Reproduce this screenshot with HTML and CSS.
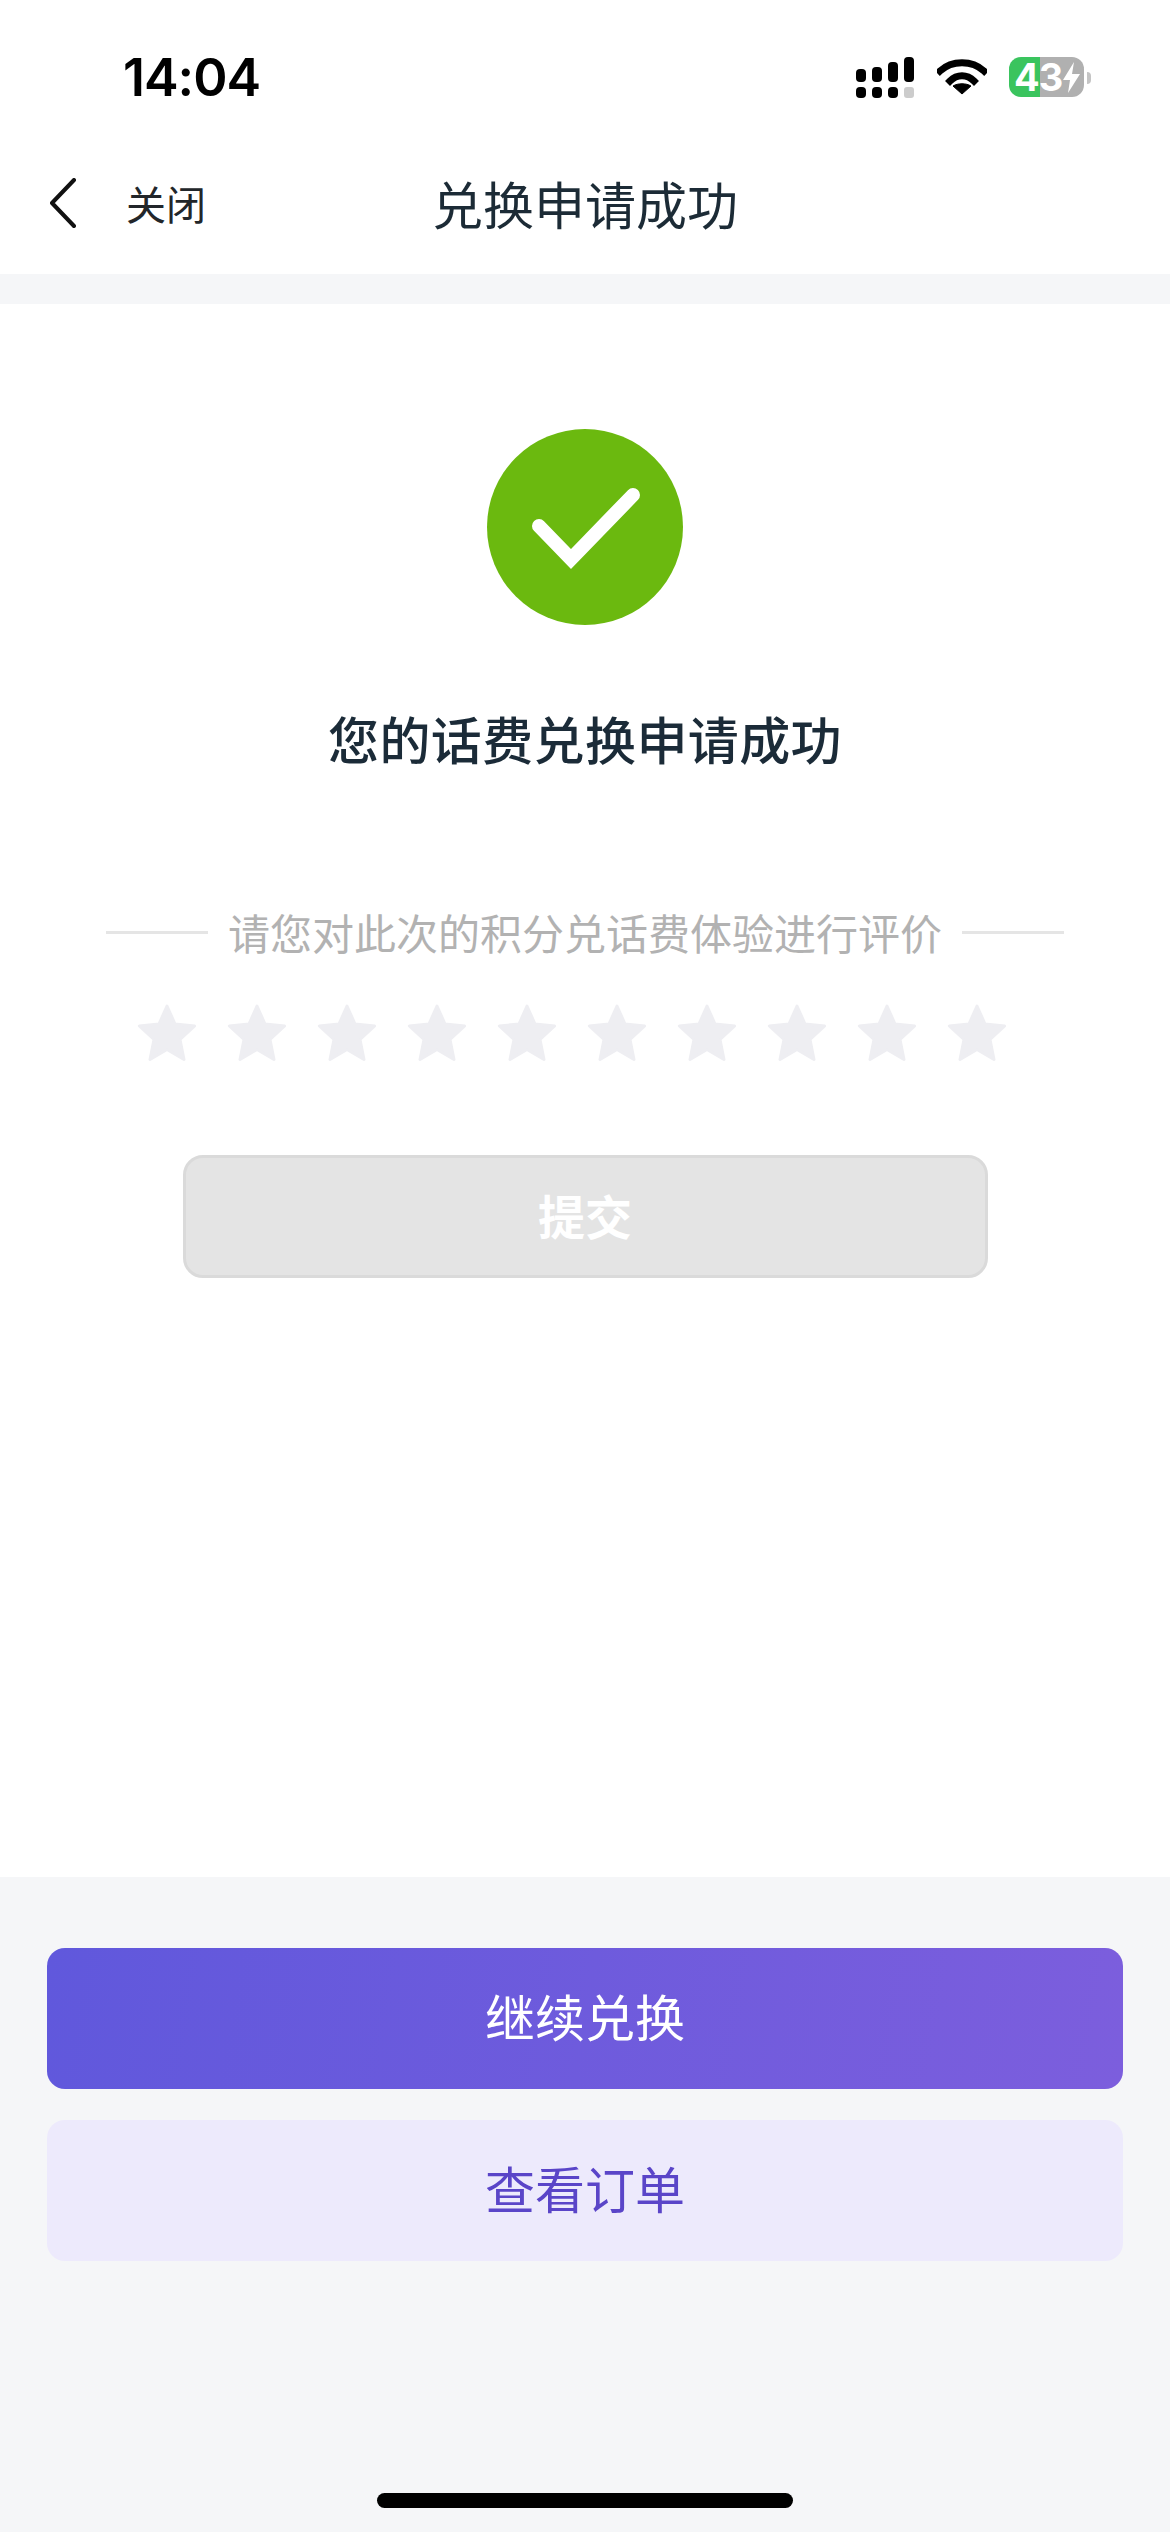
FILE: index.html
```html
<!DOCTYPE html>
<html lang="zh-CN">
<head>
    <meta charset="UTF-8">
    <meta name="viewport" content="width=device-width, initial-scale=1.0">
    <title>兑换申请成功</title>
    <link rel="stylesheet" href="styles.css">
</head>
<body>
<svg class="defs" width="0" height="0">
    <symbol id="star" viewBox="0 0 60 58">
        <polygon points="30,2 38,20 57.6,22 43,35.5 47,55.5 30,45.5 13,55.5 17,35.5 2.4,22 22,20" fill="#eeeef2" stroke="#eeeef2" stroke-width="3" stroke-linejoin="round"/>
    </symbol>
</svg>

<div class="status-bar">
    <span class="time">14:04</span>
    <div class="status-icons">
        <svg class="signal" width="58" height="42" viewBox="0 0 58 42">
            <rect x="0" y="12" width="10" height="13" rx="4" fill="#000"/>
            <rect x="16" y="10" width="10" height="15" rx="4" fill="#000"/>
            <rect x="32" y="5" width="10" height="20" rx="4" fill="#000"/>
            <rect x="48" y="0" width="10" height="25" rx="4" fill="#000"/>
            <rect x="0" y="30" width="10" height="11" rx="4" fill="#000"/>
            <rect x="16" y="30" width="10" height="11" rx="4" fill="#000"/>
            <rect x="32" y="30" width="10" height="11" rx="4" fill="#000"/>
            <rect x="48" y="30" width="10" height="11" rx="3" fill="#ccc"/>
        </svg>
        <svg class="wifi" width="50" height="37" viewBox="0 0 50 37">
            <path d="M3 13 C15 2 35 2 47 13" fill="none" stroke="#000" stroke-width="7" stroke-linecap="square"/>
            <path d="M13 23 C20 16 30 16 37 23" fill="none" stroke="#000" stroke-width="7" stroke-linecap="square"/>
            <path d="M25 36 L16 28 C21 25 29 25 34 28 Z" fill="#000" stroke="#000" stroke-linejoin="round"/>
        </svg>
        <div class="battery">
            <span class="battery-num">43</span>
            <svg width="17" height="31" viewBox="0 0 17 31">
                <path d="M11 0 L0 18 H7 L5 31 L17 12 H9 Z" fill="#fff"/>
            </svg>
        </div>
        <span class="battery-tip"></span>
    </div>
</div>

<div class="nav">
    <div class="nav-left">
        <svg width="30" height="50" viewBox="0 0 30 50">
            <path d="M26 2 L4 25 L26 48" fill="none" stroke="#111" stroke-width="4" stroke-linecap="round" stroke-linejoin="round"/>
        </svg>
        <span class="nav-close">关闭</span>
    </div>
    <div class="nav-title">兑换申请成功</div>
    <div></div>
</div>
<div class="band"></div>

<div class="main">
    <svg class="success" width="196" height="198" viewBox="0 0 196 198">
        <circle cx="98" cy="99" r="98" fill="#6bb90f"/>
        <path d="M52 98 L84 131 L146 67" fill="none" stroke="#fff" stroke-width="14" stroke-linecap="round" stroke-linejoin="miter"/>
    </svg>
    <h1 class="result">您的话费兑换申请成功</h1>

    <div class="rate-title">
        <span class="rate-line"></span>
        <span>请您对此次的积分兑话费体验进行评价</span>
        <span class="rate-line"></span>
    </div>
    <div class="stars">
        <svg width="60" height="58"><use href="#star"/></svg>
        <svg width="60" height="58"><use href="#star"/></svg>
        <svg width="60" height="58"><use href="#star"/></svg>
        <svg width="60" height="58"><use href="#star"/></svg>
        <svg width="60" height="58"><use href="#star"/></svg>
        <svg width="60" height="58"><use href="#star"/></svg>
        <svg width="60" height="58"><use href="#star"/></svg>
        <svg width="60" height="58"><use href="#star"/></svg>
        <svg width="60" height="58"><use href="#star"/></svg>
        <svg width="60" height="58"><use href="#star"/></svg>
    </div>
    <button class="submit">提交</button>
</div>

<div class="footer">
    <button class="btn btn-primary">继续兑换</button>
    <button class="btn btn-light">查看订单</button>
    <div class="home-bar"></div>
</div>
</body>
</html>
```

FILE: styles.css
```css
* {
    box-sizing: border-box;
}

body {
    margin: 0;
    width: 1170px;
    height: 2532px;
    display: flex;
    flex-direction: column;
    overflow: hidden;
    background-color: #fff;
    font-family: "Noto Sans CJK SC", "Noto Sans", sans-serif;
}

.defs {
    position: absolute;
}

.status-bar {
    height: 120px;
    padding: 57px 79px 0 123px;
    display: flex;
    justify-content: space-between;
    align-items: flex-start;
}

.time {
    font-family: "Inter", sans-serif;
    font-weight: 600;
    font-size: 52px;
    line-height: 42px;
    letter-spacing: -1px;
    color: #000;
}

.status-icons {
    display: flex;
    align-items: flex-start;
}

.signal {
    margin-right: 23px;
}

.wifi {
    margin-top: 1px;
    margin-right: 22px;
}

.battery {
    width: 75px;
    height: 40px;
    border-radius: 12px;
    padding-left: 5px;
    display: flex;
    align-items: center;
    gap: 1px;
    background: linear-gradient(90deg, #3ac45e 0, #3ac45e 31px, #b0b0b0 31px);
}

.battery-num {
    font-family: "Inter", sans-serif;
    font-weight: 700;
    font-size: 38px;
    line-height: 40px;
    letter-spacing: -1px;
    color: #fff;
}

.battery-tip {
    width: 4px;
    height: 12px;
    margin: 15px 0 0 3px;
    border-radius: 0 6px 6px 0;
    background-color: #c4c4c4;
}

.nav {
    height: 154px;
    padding-top: 12px;
    display: grid;
    grid-template-columns: 1fr auto 1fr;
    align-items: center;
}

.nav-left {
    padding-left: 48px;
    display: flex;
    align-items: center;
    gap: 48px;
}

.nav-close {
    font-size: 40px;
    color: #22262a;
}

.nav-title {
    font-size: 51px;
    color: #1c2b36;
}

.band {
    height: 30px;
    background-color: #f5f6f8;
}

.main {
    flex: 1;
    display: flex;
    flex-direction: column;
    align-items: center;
    padding-top: 124px;
}

.result {
    margin: 67px 0 0;
    font-size: 51px;
    line-height: 90px;
    letter-spacing: 0.4px;
    font-weight: 500;
    color: #1b2b38;
}

.rate-title {
    margin-top: 119px;
    display: flex;
    align-items: center;
    gap: 20px;
    font-size: 42px;
    line-height: 60px;
    color: #b2b2b2;
}

.rate-line {
    width: 102px;
    height: 3px;
    background-color: #e5e5e5;
}

.stars {
    margin-top: 42px;
    padding-right: 26px;
    display: flex;
    gap: 30px;
}

.submit {
    width: 805px;
    height: 123px;
    margin-top: 93px;
    padding-bottom: 6px;
    border: 3px solid #dadada;
    border-radius: 20px;
    background-color: #e4e4e4;
    color: #fff;
    font-family: inherit;
    font-size: 47px;
    font-weight: 700;
}

.footer {
    height: 655px;
    padding: 71px 47px 0;
    display: flex;
    flex-direction: column;
    align-items: center;
    background-color: #f5f6f8;
}

.btn {
    width: 100%;
    height: 141px;
    padding-bottom: 8px;
    border: none;
    border-radius: 18px;
    font-family: inherit;
    font-size: 50px;
}

.btn-primary {
    background: linear-gradient(100deg, #6058dc, #7c5edd);
    color: #fff;
}

.btn-light {
    margin-top: 31px;
    background-color: #edeafc;
    color: #5a45c8;
}

.home-bar {
    width: 416px;
    height: 15px;
    margin-top: 232px;
    border-radius: 8px;
    background-color: #000;
}
```
